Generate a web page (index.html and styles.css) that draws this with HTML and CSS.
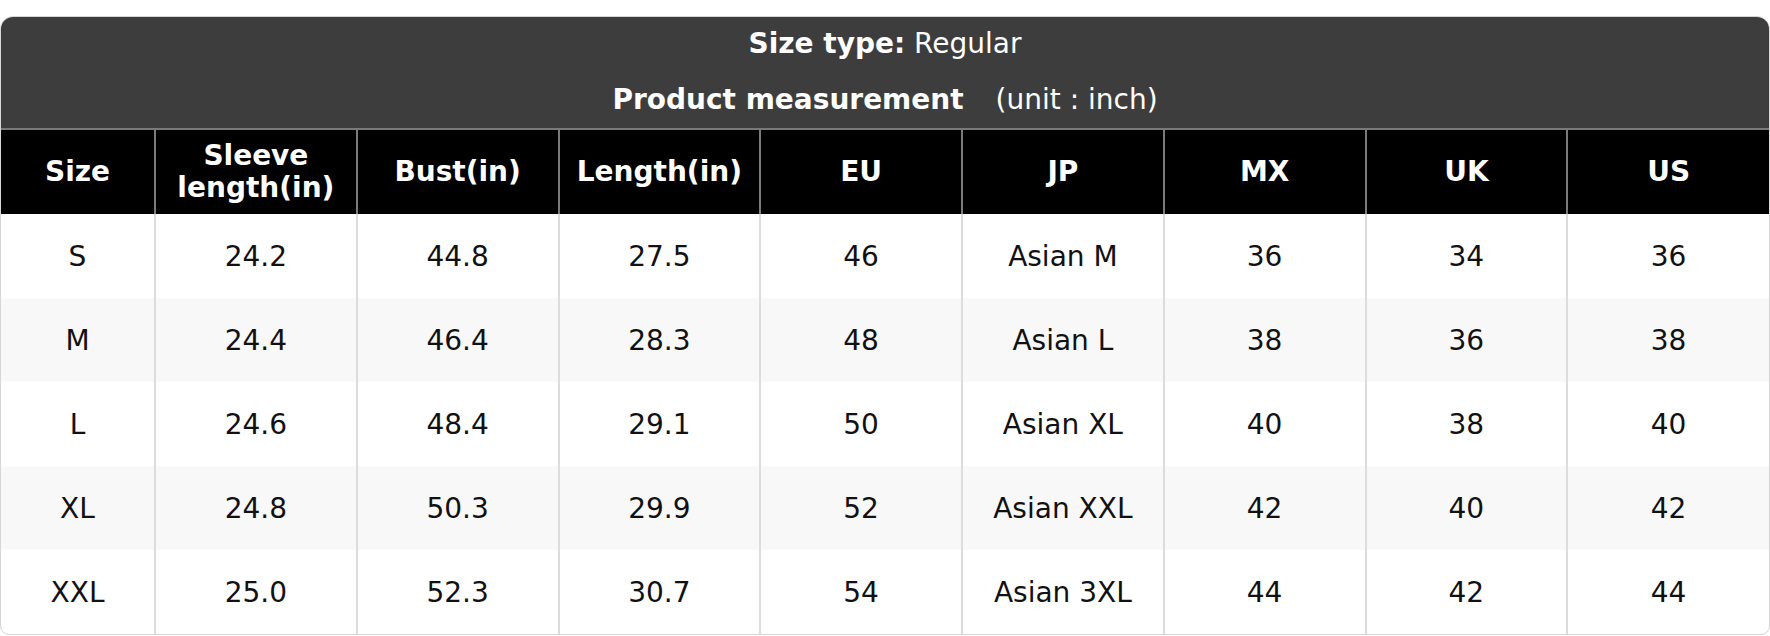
FILE: index.html
```html
<!DOCTYPE html>
<html>
<head>
<meta charset="utf-8">
<link rel="stylesheet" href="styles.css">
</head>
<body>
<div class="card">
  <div class="card-head">
    <div class="head-line first"><b>Size type:</b> Regular</div>
    <div class="head-line second"><b>Product measurement</b><span class="unit">(unit : inch)</span></div>
  </div>
  <table class="chart">
    <colgroup>
      <col class="col-size">
      <col><col><col><col><col><col><col><col>
    </colgroup>
    <thead>
      <tr>
        <th>Size</th>
        <th>Sleeve length(in)</th>
        <th>Bust(in)</th>
        <th>Length(in)</th>
        <th>EU</th>
        <th>JP</th>
        <th>MX</th>
        <th>UK</th>
        <th>US</th>
      </tr>
    </thead>
    <tbody>
      <tr><td>S</td><td>24.2</td><td>44.8</td><td>27.5</td><td>46</td><td>Asian M</td><td>36</td><td>34</td><td>36</td></tr>
      <tr><td>M</td><td>24.4</td><td>46.4</td><td>28.3</td><td>48</td><td>Asian L</td><td>38</td><td>36</td><td>38</td></tr>
      <tr><td>L</td><td>24.6</td><td>48.4</td><td>29.1</td><td>50</td><td>Asian XL</td><td>40</td><td>38</td><td>40</td></tr>
      <tr><td>XL</td><td>24.8</td><td>50.3</td><td>29.9</td><td>52</td><td>Asian XXL</td><td>42</td><td>40</td><td>42</td></tr>
      <tr><td>XXL</td><td>25.0</td><td>52.3</td><td>30.7</td><td>54</td><td>Asian 3XL</td><td>44</td><td>42</td><td>44</td></tr>
    </tbody>
  </table>
</div>
</body>
</html>
```

FILE: styles.css
```css
html, body {
  margin: 0;
  padding: 0;
  background: #ffffff;
}

body {
  font-family: "DejaVu Sans", "Liberation Sans", sans-serif;
  font-size: 28px;
  color: #111111;
  padding-top: 16px;
}

.card {
  width: 1770px;
  box-sizing: border-box;
  border: 1px solid #d6d6d6;
  border-radius: 13px 13px 9px 9px;
  overflow: hidden;
  background: #ffffff;
}

.card-head {
  background: #3d3d3d;
  color: #ffffff;
  height: 111px;
  display: flex;
  flex-direction: column;
  align-items: center;
}

.head-line {
  flex: none;
  text-align: center;
  white-space: pre;
}

.head-line.first {
  height: 54px;
  line-height: 54px;
}

.head-line.second {
  height: 57px;
  line-height: 57px;
}

.head-line b {
  font-weight: bold;
}

.unit {
  margin-left: 32px;
}

.chart {
  width: 100%;
  border-collapse: collapse;
  table-layout: fixed;
}

.col-size {
  width: 154px;
}

.chart th {
  background: #000000;
  color: #ffffff;
  font-weight: bold;
  height: 84px;
  padding: 0 8px;
  line-height: 32px;
  border-left: 2px solid #7a7a7a;
  border-top: 2px solid #7a7a7a;
  text-align: center;
}

.chart th:first-child,
.chart td:first-child {
  border-left: none;
}

.chart td {
  height: 84px;
  padding: 0 8px;
  text-align: center;
  border-left: 2px solid #dcdcdc;
  color: #111111;
}

.chart tbody tr:nth-child(even) td {
  background: #f8f8f8;
}
```
